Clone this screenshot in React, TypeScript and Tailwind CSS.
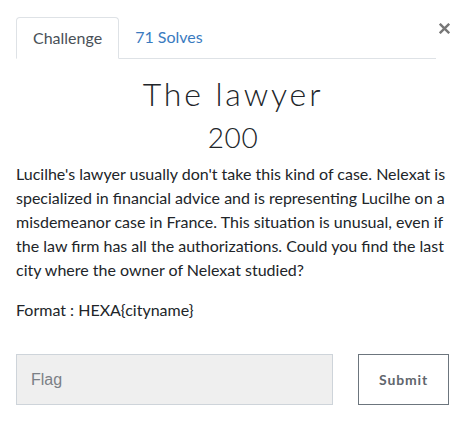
import React from "react";

export default function App() {
  return (
    <div className="w-[466px] h-[437px] bg-white px-4 pt-[17px] text-[#212529]" style={{ fontFamily: "Lato, 'Liberation Sans', sans-serif" }}>
      <div className="flex items-start">
        <div className="flex w-[420px] border-b border-[#dee2e6]">
          <div className="-mb-px rounded-t-[4px] border border-[#dee2e6] border-b-white bg-white px-4 py-2 text-base leading-6 text-[#495057]">
            Challenge
          </div>
          <div className="px-4 py-2 text-base leading-6 text-[#3a7bbf]">71 Solves</div>
        </div>
        <div className="ml-auto mt-[6px] flex h-[11px] w-[11px] items-center justify-center">
          <svg width="11" height="11" viewBox="0 0 11 11">
            <path d="M0.8 0.8 L10.2 10.2 M10.2 0.8 L0.8 10.2" stroke="#777" strokeWidth="2.4" strokeLinecap="butt" />
          </svg>
        </div>
      </div>

      <h2 className="mt-[16px] text-center text-[32px] font-light leading-[38px] tracking-[0.09em] text-[#212529]">
        The lawyer
      </h2>
      <h4 className="mt-[7px] text-center text-[28px] font-light leading-[34px] tracking-[0.02em] text-[#212529]">200</h4>

      <p className="mt-[8px] text-base leading-6">
        Lucilhe's lawyer usually don't take this kind of case. Nelexat is specialized in financial advice and is representing Lucilhe on a misdemeanor case in France. This situation is unusual, even if the law firm has all the authorizations. Could you find the last city where the owner of Nelexat studied?
      </p>
      <p className="mt-4 text-base leading-6">Format : HEXA{"{cityname}"}</p>

      <div className="mt-[32px] flex items-start">
        <div
          className="flex h-[51px] w-[317px] items-center border border-[#ced4da] bg-[#efefef] pl-[14px] text-base text-[#7b8086]"
          style={{ fontFamily: "'Liberation Sans', Arial, sans-serif" }}
        >
          Flag
        </div>
        <div className="ml-[25px] flex h-[51px] w-[91px] items-center justify-center border border-[#6c757d] text-[14px] font-bold tracking-[0.06em] text-[#5f666d]">
          Submit
        </div>
      </div>
    </div>
  );
}
